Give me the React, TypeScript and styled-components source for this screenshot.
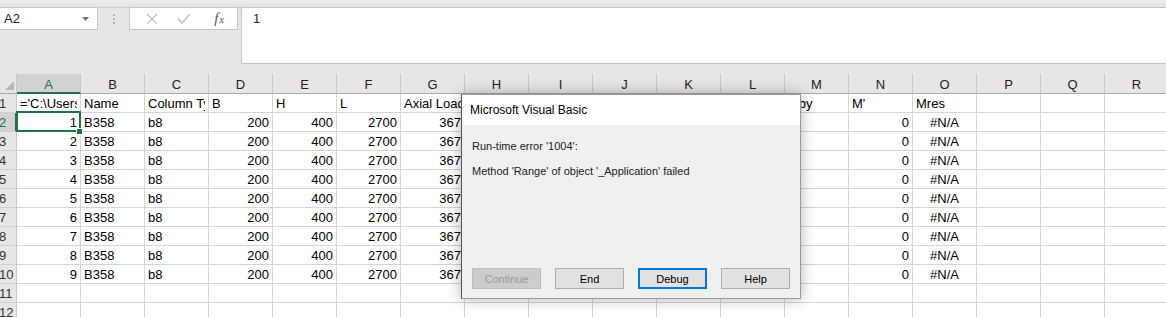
import React from 'react'
import styled, { createGlobalStyle, css } from 'styled-components'

const GlobalStyle = createGlobalStyle`
  html, body {
    margin: 0;
    padding: 0;
  }
  body {
    font-family: 'Liberation Sans', Arial, sans-serif;
    background: #ffffff;
  }
`

const GREEN = '#217346'
const GRID = '#d4d4d4'

const columns = 'ABCDEFGHIJKLMNOPQR'.split('')

type CellValue = string | number

const headerRow: CellValue[] = [
  "='C:\\Users\\Engineer\\Desktop\\Columns.xlsx'",
  'Name',
  'Column Type',
  'B',
  'H',
  'L',
  'Axial Load',
  'Mx',
  'My',
  'Mbx',
  'Max',
  'Mbx',
  'Mby',
  "M'",
  'Mres',
  '',
  '',
  '',
]

const dataRows: CellValue[][] = Array.from({ length: 9 }, (_, i) => [
  i + 1,
  'B358',
  'b8',
  200,
  400,
  2700,
  367,
  '',
  '',
  '',
  '',
  '',
  '',
  0,
  '#N/A',
  '',
  '',
  '',
])

const rows: CellValue[][] = [
  headerRow,
  ...dataRows,
  Array(18).fill(''),
  Array(18).fill(''),
  Array(18).fill(''),
]

type Align = 'left' | 'right' | 'center'

const alignOf = (value: CellValue): Align => {
  if (typeof value === 'number') return 'right'
  if (value === '#N/A') return 'center'
  return 'left'
}

export default function App() {
  return (
    <>
      <GlobalStyle />
      <Page>
        <TopStrip />
        <FormulaBar>
          <NameBox>
            <span>A2</span>
            <DropArrow width="7" height="4" viewBox="0 0 7 4">
              <path d="M0 0 H7 L3.5 4 Z" fill="#707070" />
            </DropArrow>
          </NameBox>
          <Grip>
            <Dot />
            <Dot />
            <Dot />
          </Grip>
          <FxBox>
            <FxButton>
              <svg width="12" height="12" viewBox="0 0 12 12">
                <path
                  d="M1 1 L11 11 M11 1 L1 11"
                  stroke="#c4c4c4"
                  strokeWidth="1.4"
                  fill="none"
                />
              </svg>
            </FxButton>
            <FxButton>
              <svg width="14" height="11" viewBox="0 0 14 11">
                <path
                  d="M1 5.5 L5 10 L13 1"
                  stroke="#c4c4c4"
                  strokeWidth="1.6"
                  fill="none"
                />
              </svg>
            </FxButton>
            <FxButton>
              <FxLabel>
                f<sub>x</sub>
              </FxLabel>
            </FxButton>
          </FxBox>
          <FormulaInput>1</FormulaInput>
        </FormulaBar>

        <Sheet>
          <HeaderRow>
            <Corner>
              <svg width="9" height="9" viewBox="0 0 9 9">
                <path d="M9 0 V9 H0 Z" fill="#b7b7b7" />
              </svg>
            </Corner>
            {columns.map((c) => (
              <ColHeader key={c} $selected={c === 'A'}>
                {c}
              </ColHeader>
            ))}
          </HeaderRow>
          {rows.map((row, r) => (
            <Row key={r}>
              <RowHeader $selected={r === 1}>{r + 1}</RowHeader>
              {row.map((value, c) => (
                <Cell
                  key={c}
                  $align={alignOf(value)}
                  $active={r === 1 && c === 0}
                >
                  <CellText>{value}</CellText>
                </Cell>
              ))}
            </Row>
          ))}
        </Sheet>

        <Dialog>
          <DialogTitle>Microsoft Visual Basic</DialogTitle>
          <DialogBody>
            <Message>Run-time error '1004':</Message>
            <Message>Method 'Range' of object '_Application' failed</Message>
            <ButtonRow>
              <DialogButton disabled>Continue</DialogButton>
              <DialogButton>End</DialogButton>
              <DialogButton $focused>Debug</DialogButton>
              <DialogButton>Help</DialogButton>
            </ButtonRow>
          </DialogBody>
        </Dialog>
      </Page>
    </>
  )
}

const Page = styled.div`
  position: relative;
  width: 1166px;
  height: 317px;
  overflow: hidden;
  background: #e6e6e6;
  color: #000;
`

const TopStrip = styled.div`
  height: 8px;
  box-sizing: border-box;
  background: linear-gradient(#ededed, #e4e4e4);
  border-bottom: 1px solid #d3d3d3;
`

const FormulaBar = styled.div`
  display: flex;
  align-items: flex-start;
  height: 57px;
  margin-top: -1px;
`

const boxBorder = css`
  box-sizing: border-box;
  background: #fff;
  border: 1px solid #c6c6c6;
`

const NameBox = styled.div`
  ${boxBorder};
  width: 99px;
  height: 23px;
  margin-left: -1px;
  display: flex;
  align-items: center;
  padding: 0 8px 0 4px;
  font-size: 13px;
  color: #222;

  span {
    flex: 1;
  }
`

const DropArrow = styled.svg`
  display: block;
`

const Grip = styled.div`
  width: 31px;
  height: 23px;
  display: flex;
  flex-direction: column;
  align-items: center;
  justify-content: center;
  gap: 2px;
`

const Dot = styled.span`
  width: 2px;
  height: 2px;
  background: #b4b4b4;
`

const FxBox = styled.div`
  ${boxBorder};
  width: 109px;
  height: 23px;
  display: flex;
  align-items: center;
  padding: 0 6px 0 6px;
`

const FxButton = styled.div`
  flex: 1;
  display: flex;
  align-items: center;
  justify-content: center;

  svg {
    display: block;
  }
`

const FxLabel = styled.span`
  font-family: 'Liberation Serif', 'Times New Roman', serif;
  font-style: italic;
  font-size: 15px;
  color: #5a5a5a;
  line-height: 1;
  margin-left: 8px;

  sub {
    font-size: 11px;
    vertical-align: 0;
    margin-left: 1px;
  }
`

const FormulaInput = styled.div`
  ${boxBorder};
  flex: 1;
  height: 57px;
  margin-left: 3px;
  margin-right: -2px;
  padding: 2px 11px;
  font-size: 13px;
  line-height: 18px;
  color: #222;
`

const Sheet = styled.div`
  margin-top: 10px;
  background: #fff;
`

const HeaderRow = styled.div`
  display: flex;
  height: 20px;
  background: #e6e6e6;
`

const Corner = styled.div`
  flex: none;
  box-sizing: border-box;
  width: 17px;
  height: 20px;
  border-right: 1px solid #c8c8c8;
  border-bottom: 1px solid #ababab;
  display: flex;
  align-items: flex-end;
  justify-content: flex-end;
  padding: 0 2px 3px 0;
`

const ColHeader = styled.div<{ $selected?: boolean }>`
  flex: none;
  box-sizing: border-box;
  width: 64px;
  height: 20px;
  border-right: 1px solid #c8c8c8;
  border-bottom: 1px solid #ababab;
  display: flex;
  align-items: center;
  justify-content: center;
  padding-top: 2px;
  font-size: 13px;
  color: #222;

  ${(p) =>
    p.$selected &&
    css`
      background: #d2d2d2;
      color: ${GREEN};
      border-bottom: 2px solid ${GREEN};
      padding-top: 3px;
    `}
`

const Row = styled.div`
  display: flex;
  height: 19px;
`

const RowHeader = styled.div<{ $selected?: boolean }>`
  flex: none;
  box-sizing: border-box;
  width: 17px;
  height: 19px;
  background: #e6e6e6;
  border-right: 1px solid #c8c8c8;
  border-bottom: 1px solid #d0d0d0;
  padding-top: 2px;
  font-size: 13px;
  line-height: 16px;
  color: #333;
  white-space: nowrap;
  overflow: hidden;
  text-indent: -1px;

  ${(p) =>
    p.$selected &&
    css`
      background: #d2d2d2;
      color: ${GREEN};
      border-right: 2px solid ${GREEN};
    `}
`

const Cell = styled.div<{ $align: Align; $active?: boolean }>`
  flex: none;
  position: relative;
  box-sizing: border-box;
  width: 64px;
  height: 19px;
  border-right: 1px solid ${GRID};
  border-bottom: 1px solid ${GRID};
  padding: 2px 3px 0 3px;
  font-size: 13px;
  line-height: 16px;
  text-align: ${(p) => p.$align};

  ${(p) =>
    p.$active &&
    css`
      &::after {
        content: '';
        position: absolute;
        left: -1px;
        right: -1px;
        top: -2px;
        bottom: -1px;
        border: 2px solid ${GREEN};
        z-index: 2;
      }
      &::before {
        content: '';
        position: absolute;
        left: 59px;
        top: 15px;
        width: 7px;
        height: 7px;
        box-sizing: border-box;
        background: ${GREEN};
        border: 1px solid #fff;
        z-index: 3;
      }
    `}
`

const CellText = styled.div`
  overflow: hidden;
  white-space: nowrap;
`

const Dialog = styled.div`
  position: absolute;
  left: 461px;
  top: 94px;
  width: 340px;
  height: 205px;
  box-sizing: border-box;
  display: flex;
  flex-direction: column;
  background: #f0f0f0;
  border: 1px solid #9a9a9a;
  border-left-color: #555;
  box-shadow: 0 0 14px rgba(0, 0, 0, 0.3);
  z-index: 10;
`

const DialogTitle = styled.div`
  height: 30px;
  flex: none;
  display: flex;
  align-items: center;
  padding-left: 8px;
  background: #fff;
  font-size: 12px;
  color: #000;
`

const DialogBody = styled.div`
  flex: 1;
  display: flex;
  flex-direction: column;
  padding: 15px 10px 9px 10px;
`

const Message = styled.div`
  font-size: 11px;
  line-height: 13px;
  color: #222;
  margin-bottom: 12px;
`

const ButtonRow = styled.div`
  margin-top: auto;
  display: flex;
  gap: 14px;
  padding-left: -1px;
`

const DialogButton = styled.button<{ $focused?: boolean }>`
  width: 69px;
  height: 21px;
  box-sizing: border-box;
  padding: 0;
  background: #e1e1e1;
  border: 1px solid #adadad;
  font-family: 'Liberation Sans', Arial, sans-serif;
  font-size: 11px;
  color: #000;

  &:disabled {
    background: #cccccc;
    border-color: #bfbfbf;
    color: #9a9a9a;
  }

  ${(p) =>
    p.$focused &&
    css`
      border: 2px solid #0078d7;
    `}
`
